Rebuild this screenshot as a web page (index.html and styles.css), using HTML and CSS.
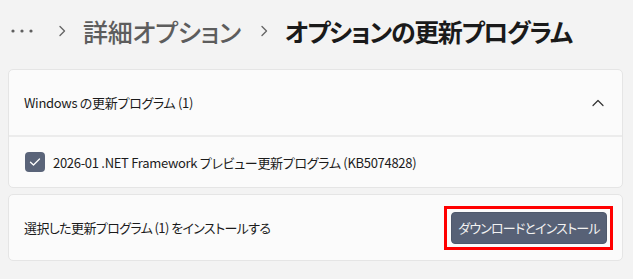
FILE: index.html
```html
<!DOCTYPE html>
<html lang="ja">
<head>
<meta charset="utf-8">
<link rel="stylesheet" href="styles.css">
</head>
<body>
<div class="crumbs">
  <svg class="dots" width="24" height="6" viewBox="0 0 24 6"><circle cx="3" cy="3" r="1.6" fill="#5f5f5f"/><circle cx="12" cy="3" r="1.6" fill="#5f5f5f"/><circle cx="21" cy="3" r="1.6" fill="#5f5f5f"/></svg>
  <svg class="sep" width="8" height="12" viewBox="0 0 8 12"><path d="M2 1.5 L6.5 6 L2 10.5" fill="none" stroke="#666" stroke-width="1.4" stroke-linecap="round" stroke-linejoin="round"/></svg>
  <span class="crumb">詳細オプション</span>
  <svg class="sep" width="8" height="12" viewBox="0 0 8 12"><path d="M2 1.5 L6.5 6 L2 10.5" fill="none" stroke="#666" stroke-width="1.4" stroke-linecap="round" stroke-linejoin="round"/></svg>
  <span class="crumb current">オプションの更新プログラム</span>
</div>
<div class="card expander">
  <div class="exp-head">
    <span class="label">Windows の更新プログラム (1)</span>
    <svg class="chev" width="12" height="8" viewBox="0 0 12 8"><path d="M1 6.5 L6 1.5 L11 6.5" fill="none" stroke="#333" stroke-width="1.2" stroke-linecap="round" stroke-linejoin="round"/></svg>
  </div>
  <div class="exp-body">
    <span class="check"><svg width="12" height="10" viewBox="0 0 12 10"><path d="M1.5 5.2 L4.5 8 L10.5 2" fill="none" stroke="#fff" stroke-width="1.3" stroke-linecap="round" stroke-linejoin="round"/></svg></span>
    <span class="label">2026-01 .NET Framework プレビュー更新プログラム (KB5074828)</span>
  </div>
</div>
<div class="card action">
  <span class="label narrow">選択した更新プログラム (1) をインストールする</span>
  <span class="highlight"><button class="btn">ダウンロードとインストール</button></span>
</div>
</body>
</html>
```

FILE: styles.css
```css
html, body {
  margin: 0;
  padding: 0;
  background: #f3f3f3;
}
body {
  font-family: "Noto Sans CJK JP", sans-serif;
  font-feature-settings: "palt";
  color: #1b1b1b;
  width: 633px;
  height: 279px;
  overflow: hidden;
}
.crumbs {
  display: flex;
  align-items: center;
  height: 62px;
  margin-bottom: 7px;
  padding-left: 10px;
  font-size: 25px;
  letter-spacing: -0.3px;
}
.dots {
  display: block;
  margin-right: 24px;
}
.sep {
  display: block;
  margin-right: 17px;
}
.crumb {
  color: #5d5d5d;
  margin-right: 19px;
  font-weight: 500;
}
.crumb.current {
  color: #1a1a1a;
  font-weight: 600;
  letter-spacing: -1.4px;
}
.card {
  margin: 0 10px 0 8px;
  background: #fbfbfb;
  border: 1px solid #e5e5e5;
  border-radius: 5px;
  box-sizing: border-box;
}
.label {
  font-size: 13px;
  letter-spacing: -0.3px;
  color: #1b1b1b;
  white-space: nowrap;
}
.label.narrow {
  letter-spacing: -0.6px;
}
.exp-head {
  height: 67px;
  display: flex;
  align-items: center;
  justify-content: space-between;
  padding: 0 18px 0 15px;
  box-sizing: border-box;
  border-bottom: 2px solid #ececec;
}
.chev { display: block; }
.exp-body {
  height: 50px;
  display: flex;
  align-items: center;
  padding-left: 16px;
  box-sizing: border-box;
  gap: 8px;
}
.check {
  width: 20px;
  height: 20px;
  border-radius: 4px;
  background: #5a6479;
  display: flex;
  align-items: center;
  justify-content: center;
}
.action {
  margin-top: 6px;
  height: 67px;
  display: flex;
  align-items: center;
  justify-content: space-between;
  padding: 0 9px 0 15px;
}
.highlight {
  display: flex;
  border: 3px solid #ff0000;
  padding: 3px 3px 3px 4px;
}
.btn {
  width: 156px;
  height: 32px;
  border: 1px solid #4f596c;
  border-radius: 4px;
  background: #576176;
  color: #f2f2f2;
  font-family: "Noto Sans CJK JP", sans-serif;
  font-feature-settings: "palt";
  font-size: 13px;
  letter-spacing: -0.8px;
  white-space: nowrap;
  padding: 0;
}
```
